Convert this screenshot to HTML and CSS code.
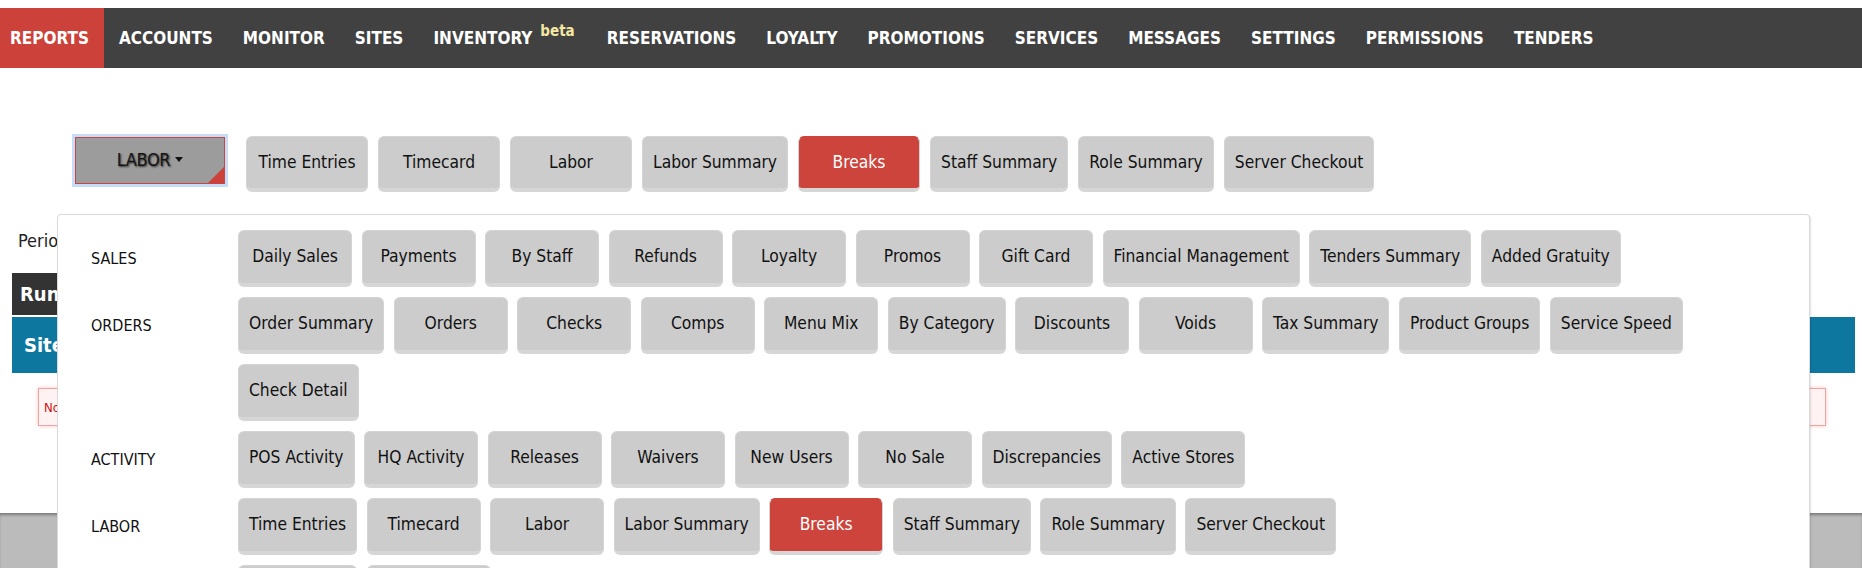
FILE: index.html
```html
<!DOCTYPE html>
<html>
<head>
<meta charset="utf-8">
<title>Reports - Labor - Breaks</title>
<link rel="stylesheet" href="styles.css">
</head>
<body>
<nav class="topnav">
  <a class="nav-item active" href="#">REPORTS</a>
  <a class="nav-item" href="#">ACCOUNTS</a>
  <a class="nav-item" href="#">MONITOR</a>
  <a class="nav-item" href="#">SITES</a>
  <a class="nav-item" href="#">INVENTORY <sup class="beta">beta</sup></a>
  <a class="nav-item" href="#">RESERVATIONS</a>
  <a class="nav-item" href="#">LOYALTY</a>
  <a class="nav-item" href="#">PROMOTIONS</a>
  <a class="nav-item" href="#">SERVICES</a>
  <a class="nav-item" href="#">MESSAGES</a>
  <a class="nav-item" href="#">SETTINGS</a>
  <a class="nav-item" href="#">PERMISSIONS</a>
  <a class="nav-item" href="#">TENDERS</a>
</nav>

<main class="page">
  <div class="toolbar">
    <button class="dropdown-toggle">LABOR<span class="caret"></span><span class="corner"></span></button>
    <button class="btn top">Time Entries</button>
    <button class="btn top">Timecard</button>
    <button class="btn top">Labor</button>
    <button class="btn top">Labor Summary</button>
    <button class="btn top active">Breaks</button>
    <button class="btn top">Staff Summary</button>
    <button class="btn top">Role Summary</button>
    <button class="btn top">Server Checkout</button>

    <div class="menu-panel">
      <div class="group">
        <div class="group-label">SALES</div>
        <div class="group-buttons">
          <button class="btn">Daily Sales</button>
          <button class="btn">Payments</button>
          <button class="btn">By Staff</button>
          <button class="btn">Refunds</button>
          <button class="btn">Loyalty</button>
          <button class="btn">Promos</button>
          <button class="btn">Gift Card</button>
          <button class="btn">Financial Management</button>
          <button class="btn">Tenders Summary</button>
          <button class="btn">Added Gratuity</button>
        </div>
      </div>
      <div class="group">
        <div class="group-label">ORDERS</div>
        <div class="group-buttons">
          <button class="btn">Order Summary</button>
          <button class="btn">Orders</button>
          <button class="btn">Checks</button>
          <button class="btn">Comps</button>
          <button class="btn">Menu Mix</button>
          <button class="btn">By Category</button>
          <button class="btn">Discounts</button>
          <button class="btn">Voids</button>
          <button class="btn">Tax Summary</button>
          <button class="btn">Product Groups</button>
          <button class="btn">Service Speed</button>
          <button class="btn">Check Detail</button>
        </div>
      </div>
      <div class="group">
        <div class="group-label">ACTIVITY</div>
        <div class="group-buttons">
          <button class="btn">POS Activity</button>
          <button class="btn">HQ Activity</button>
          <button class="btn">Releases</button>
          <button class="btn">Waivers</button>
          <button class="btn">New Users</button>
          <button class="btn">No Sale</button>
          <button class="btn">Discrepancies</button>
          <button class="btn">Active Stores</button>
        </div>
      </div>
      <div class="group">
        <div class="group-label">LABOR</div>
        <div class="group-buttons">
          <button class="btn">Time Entries</button>
          <button class="btn">Timecard</button>
          <button class="btn">Labor</button>
          <button class="btn">Labor Summary</button>
          <button class="btn active">Breaks</button>
          <button class="btn">Staff Summary</button>
          <button class="btn">Role Summary</button>
          <button class="btn">Server Checkout</button>
        </div>
      </div>
      <div class="group">
        <div class="group-label">INVENTORY</div>
        <div class="group-buttons">
          <button class="btn">Stock Levels</button>
          <button class="btn">Stock Counts</button>
        </div>
      </div>
    </div>
  </div>

  <div class="content">
    <div class="period">Period</div>
    <div class="run-bar"><span>Run Report</span></div>
    <div class="site-bar"><span>Site</span></div>
    <div class="alert">No data found for the selected period.</div>
  </div>
</main>

<footer class="footer-strip"></footer>
</body>
</html>
```

FILE: styles.css
```css
html, body {
  margin: 0;
  padding: 0;
  background: #ffffff;
  overflow: hidden;
}

body {
  padding-top: 8px;
  font-family: "DejaVu Sans Condensed", "DejaVu Sans", "Liberation Sans", sans-serif;
  font-stretch: condensed;
  color: #111;
}

/* ---------- top navigation ---------- */
.topnav {
  display: flex;
  height: 60px;
  background: #414141;
}

.nav-item {
  display: flex;
  align-items: center;
  padding: 0 15px;
  color: #ffffff;
  font-weight: bold;
  font-size: 17px;
  text-decoration: none;
  white-space: nowrap;
}

.nav-item:first-child {
  padding-left: 10px;
}

.nav-item.active {
  background: #cc4139;
}

.beta {
  color: #f3e7a3;
  font-size: 15px;
  font-weight: bold;
  position: relative;
  top: -7px;
  margin-left: 8px;
  margin-right: 2px;
}

/* ---------- page ---------- */
.page {
  position: relative;
}

.toolbar {
  position: relative;
  display: flex;
  align-items: flex-start;
  gap: 10px;
  padding: 68px 0 0 75px;
}

.dropdown-toggle {
  position: relative;
  box-sizing: border-box;
  width: 150px;
  height: 47px;
  margin-top: 1px;
  margin-right: 11px;
  background: #9c9c9c;
  border: 1px solid #c9453d;
  box-shadow: 0 0 0 3px #c5ddf8;
  font-family: inherit;
  font-stretch: condensed;
  font-size: 18px;
  color: #151515;
  text-shadow: 1px 1px 2px rgba(0, 0, 0, 0.7);
  letter-spacing: -0.4px;
  display: flex;
  align-items: center;
  justify-content: center;
  padding: 0 0 2px;
}

.caret {
  display: inline-block;
  width: 0;
  height: 0;
  margin-left: 5px;
  border-top: 5px solid #111;
  border-left: 4px solid transparent;
  border-right: 4px solid transparent;
}

.corner {
  position: absolute;
  right: 0;
  bottom: 0;
  width: 0;
  height: 0;
  border-bottom: 16px solid #cc4139;
  border-left: 16px solid transparent;
}

/* ---------- buttons ---------- */
.btn {
  box-sizing: border-box;
  min-width: 114px;
  height: 57px;
  padding: 0 10px 2px;
  background: #cccccc;
  border: 1px solid #d4d4d4;
  border-bottom: 4px solid #d6d6d6;
  border-radius: 6px;
  font-family: inherit;
  font-stretch: condensed;
  font-size: 17.3px;
  color: #111;
  white-space: nowrap;
  cursor: pointer;
}

.btn.top {
  min-width: 122px;
  height: 56px;
}

.btn.active {
  background: #cc443c;
  border-top-color: #cc443c;
  color: #ffffff;
}

/* ---------- dropdown panel ---------- */
.menu-panel {
  position: absolute;
  left: 57px;
  top: 146px;
  width: 1753px;
  box-sizing: border-box;
  padding: 15px 0 20px 33px;
  background: #ffffff;
  border: 1px solid #d9d9d9;
  border-radius: 4px;
  box-shadow: 1px 1px 2px rgba(0, 0, 0, 0.12);
  display: flex;
  flex-direction: column;
  gap: 10px;
  z-index: 5;
}

.group {
  display: grid;
  grid-template-columns: 147px 1fr;
}

.group-label {
  font-size: 16px;
  line-height: 57px;
  color: #111;
}

.group-buttons {
  display: flex;
  flex-wrap: wrap;
  gap: 10px 9.5px;
}

/* ---------- background content ---------- */
.content {
  padding: 0 7px 0 12px;
}

.period {
  margin-top: 38px;
  padding-left: 6px;
  font-size: 18px;
  line-height: 22px;
  color: #222;
}

.run-bar {
  margin-top: 21px;
  width: 320px;
  height: 42px;
  background: #333333;
  color: #ffffff;
  font-weight: bold;
  font-size: 20px;
  display: flex;
  align-items: center;
  padding-left: 8px;
  box-sizing: border-box;
}

.site-bar {
  margin-top: 2px;
  height: 56px;
  background: #0e77a0;
  color: #ffffff;
  font-weight: bold;
  font-size: 20px;
  display: flex;
  align-items: center;
  padding-left: 12px;
}

.alert {
  margin: 15px 29px 0 26px;
  height: 38px;
  box-sizing: border-box;
  background: #fff2f2;
  border: 1px solid #f4a3a3;
  box-shadow: 0 0 4px rgba(255, 80, 80, 0.35);
  color: #cc1111;
  font-size: 13px;
  display: flex;
  align-items: center;
  padding-left: 5px;
}

/* ---------- footer strip ---------- */
.footer-strip {
  margin-top: 87px;
  height: 80px;
  background: #bbbbbb;
  box-shadow: inset 0 3px 3px -1px rgba(0, 0, 0, 0.35);
}
```
